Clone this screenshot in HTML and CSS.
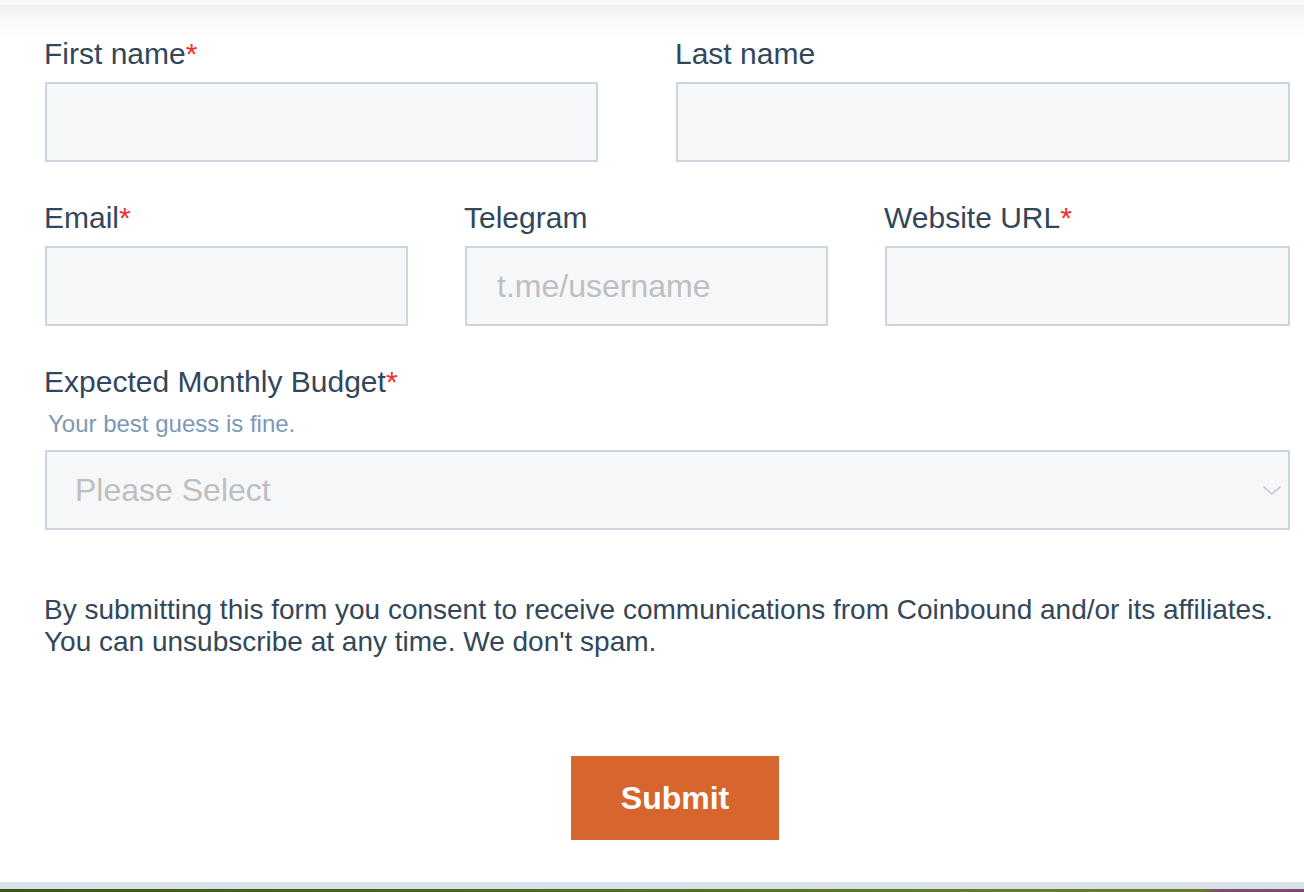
FILE: index.html
```html
<!DOCTYPE html>
<html lang="en">
<head>
<meta charset="utf-8">
<title>Contact form</title>
<link rel="stylesheet" href="styles.css">
</head>
<body>
<main class="page">
  <form class="form">
    <div class="row row-2">
      <div class="field">
        <label class="label">First name<span class="req">*</span></label>
        <input class="input input-w1" type="text">
      </div>
      <div class="field">
        <label class="label">Last name</label>
        <input class="input input-full" type="text">
      </div>
    </div>
    <div class="row row-3">
      <div class="field">
        <label class="label">Email<span class="req">*</span></label>
        <input class="input input-w2" type="email">
      </div>
      <div class="field">
        <label class="label">Telegram</label>
        <input class="input input-w2" type="text" placeholder="t.me/username">
      </div>
      <div class="field">
        <label class="label">Website URL<span class="req">*</span></label>
        <input class="input input-full" type="text">
      </div>
    </div>
    <div class="row row-last">
      <div class="field">
        <label class="label">Expected Monthly Budget<span class="req">*</span></label>
        <div class="hint">Your best guess is fine.</div>
        <div class="select-wrap">
          <select class="input select">
            <option>Please Select</option>
          </select>
          <svg class="chevron" width="18" height="9" viewBox="0 0 18 9" aria-hidden="true">
            <path d="M0.5 0.8 L9 8 L17.5 0.8" fill="none" stroke="#b9bfc6" stroke-width="1.3"/>
          </svg>
        </div>
      </div>
    </div>
    <p class="consent">By submitting this form you consent to receive communications from Coinbound and/or its affiliates.<br>You can unsubscribe at any time. We don't spam.</p>
    <div class="actions">
      <button type="button" class="submit">Submit</button>
    </div>
  </form>
  <div class="footer-band"></div>
  <div class="footer-strip"></div>
</main>
</body>
</html>
```

FILE: styles.css
```css
html, body {
  margin: 0;
  padding: 0;
  overflow: hidden;
}

body {
  width: 1304px;
  height: 892px;
  font-family: "Liberation Sans", Arial, Helvetica, sans-serif;
  color: #33475b;
  background:
    linear-gradient(to bottom, #fafafa 0, #fafafa 4px, #f0f0f0 5px, #f8f8f8 18px, #ffffff 40px) no-repeat;
  background-size: 100% 40px;
  background-color: #ffffff;
}

.page {
  display: flex;
  flex-direction: column;
  height: 892px;
}

.form {
  width: 1246px;
  padding: 36px 0 0 44px;
  flex: 1;
}

.row {
  display: grid;
  grid-template-columns: 1fr;
  margin-bottom: 38px;
}

.row-last {
  margin-bottom: 0;
}

.row-2 {
  grid-template-columns: 631px 1fr;
}

.row-3 {
  grid-template-columns: 420px 420px 1fr;
}

.field {
  display: flex;
  flex-direction: column;
  align-items: flex-start;
}

.label {
  display: block;
  font-size: 30px;
  line-height: 36px;
  color: #33475b;
  margin-bottom: 10px;
}

.req {
  color: #f2302d;
}

.hint {
  font-size: 24px;
  line-height: 28px;
  color: #7c98b6;
  margin: 0 0 12px 4px;
}

.input {
  box-sizing: border-box;
  height: 80px;
  margin: 0 0 0 1px;
  border: 2px solid #cbd6e2;
  border-radius: 0;
  background: #f5f7f9;
  padding: 0 0 0 30px;
  font-family: "Liberation Sans", Arial, Helvetica, sans-serif;
  font-size: 32px;
  color: #33475b;
  outline: none;
}

.input::placeholder {
  color: #bfbfbf;
  opacity: 1;
}

.input-w1 {
  width: 553px;
}

.input-w2 {
  width: 363px;
}

.input-full {
  width: calc(100% - 1px);
}

.select-wrap {
  position: relative;
  width: 100%;
  display: flex;
}

.select {
  width: calc(100% - 1px);
  appearance: none;
  -webkit-appearance: none;
  padding-left: 28px;
  color: #bfbfbf;
}

.chevron {
  position: absolute;
  right: 9px;
  top: 36px;
}

.consent {
  margin: 64px 0 0 0;
  font-size: 28px;
  line-height: 32px;
  color: #33475b;
}

.actions {
  display: flex;
  justify-content: center;
  margin: 98px -16px 0 0;
}

.submit {
  width: 208px;
  height: 84px;
  border: none;
  border-radius: 0;
  background: #d6652e;
  color: #ffffff;
  font-family: "Liberation Sans", Arial, Helvetica, sans-serif;
  font-weight: 700;
  font-size: 32px;
  padding: 0;
  cursor: pointer;
}

.footer-band {
  height: 7px;
  background: #d9e0e7;
}

.footer-strip {
  height: 3px;
  background: linear-gradient(to right, #3b541b 0%, #4a6a22 40%, #617d2c 75%, #6a7b2f 92%, #7b4f70 93.5%, #7a4c72 100%);
}
```
